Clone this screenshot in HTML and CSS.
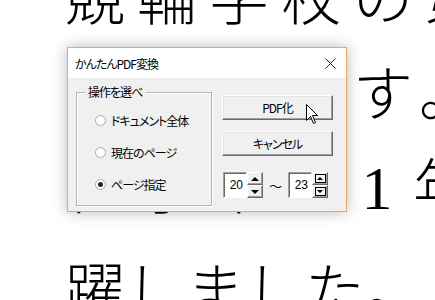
FILE: index.html
```html
<!DOCTYPE html>
<html lang="ja">
<head>
    <meta charset="UTF-8">
    <title>かんたんPDF変換</title>
    <link rel="stylesheet" href="styles.css">
</head>
<body>
    <div class="doc">
        <p class="line wide">競輪学校の第</p>
        <p class="line wide">卒業生です。</p>
        <p class="line wide lift">在学中に<span class="num">1</span>年</p>
        <p class="line">躍しました。</p>
    </div>

    <div class="dialog">
        <div class="title-bar">
            <span class="title">かんたんPDF変換</span>
            <svg class="close" width="11" height="11" viewBox="0 0 11 11">
                <path d="M0.5 0.5 L10.5 10.5 M10.5 0.5 L0.5 10.5" stroke="#222" stroke-width="1" fill="none"/>
            </svg>
        </div>
        <div class="dialog-body">
            <div class="group">
                <span class="group-label">操作を選べ</span>
                <div class="radio-row"><span class="radio"></span>ドキュメント全体</div>
                <div class="radio-row"><span class="radio"></span>現在のページ</div>
                <div class="radio-row"><span class="radio checked"></span>ページ指定</div>
            </div>
            <div class="actions">
                <div class="btn">PDF化</div>
                <div class="btn">キャンセル</div>
                <div class="range">
                    <div class="spin">
                        <div class="spin-box">20</div>
                        <div class="spin-btns">
                            <div class="spin-btn"><span class="tri up"></span></div>
                            <div class="spin-btn"><span class="tri down"></span></div>
                        </div>
                    </div>
                    <span class="tilde">～</span>
                    <div class="spin">
                        <div class="spin-box">23</div>
                        <div class="spin-btns">
                            <div class="spin-btn"><span class="boxed"><span class="tri up"></span></span></div>
                            <div class="spin-btn"><span class="boxed"><span class="tri down"></span></span></div>
                        </div>
                    </div>
                </div>
            </div>
        </div>
        <svg class="cursor" width="13" height="21" viewBox="0 0 13 21">
            <path d="M0.5 0.5 L0.5 16.5 L4.5 12.5 L7.5 19.5 L9.5 18.5 L6.5 11.5 L11.5 11.5 Z" fill="#fff" stroke="#000" stroke-width="1" stroke-linejoin="miter"/>
        </svg>
    </div>
</body>
</html>
```

FILE: styles.css
```css
html, body {
    margin: 0;
    padding: 0;
}
body {
    width: 435px;
    height: 300px;
    overflow: hidden;
    background: #fff;
    position: relative;
    font-family: "Noto Sans CJK JP", sans-serif;
}

/* document behind the dialog */
.doc {
    margin-top: -54px;
    padding-left: 65px;
    font-size: 60px;
    font-weight: 300;
    line-height: 96px;
    color: #000;
    white-space: nowrap;
}
.line {
    margin: 0;
}
.wide {
    letter-spacing: 12px;
}
.lift {
    margin-top: -3px;
    margin-bottom: 3px;
}
.num {
    display: inline-block;
    width: 60px;
    text-align: center;
    font-family: "Liberation Serif", serif;
    font-size: 62px;
}

/* dialog window */
.dialog {
    position: absolute;
    left: 67px;
    top: 47px;
    width: 278px;
    height: 163px;
    border: 1px solid #eea463;
    background: #f0f0f0;
    box-shadow: 0 0 14px rgba(0, 0, 0, 0.28);
    font-size: 12px;
    font-feature-settings: "palt";
    letter-spacing: -1px;
    color: #000;
}
.title-bar {
    height: 30px;
    background: #fff;
    display: flex;
    align-items: center;
    justify-content: space-between;
    padding: 0 10px 0 7px;
}
.dialog-body {
    display: flex;
    padding: 14px 0 0 8px;
    gap: 10px;
}

/* group box */
.group {
    position: relative;
    width: 136px;
    height: 114px;
    box-sizing: border-box;
    border: 1px solid #b4b4b4;
    box-shadow: inset 1px 1px 0 #fff, 1px 1px 0 #fff;
    padding-top: 11px;
}
.group-label {
    position: absolute;
    top: -9px;
    left: 8px;
    padding: 0 4px 0 3px;
    background: #f0f0f0;
    line-height: 16px;
}
.radio-row {
    height: 32px;
    display: flex;
    align-items: center;
    padding-left: 18px;
    gap: 5px;
}
.radio {
    width: 11px;
    height: 11px;
    border-radius: 50%;
    border: 1px solid #a8a8a8;
    background: #fff;
    box-sizing: border-box;
    position: relative;
}
.radio.checked::after {
    content: "";
    position: absolute;
    left: 2px;
    top: 2px;
    width: 5px;
    height: 5px;
    border-radius: 50%;
    background: #222;
}

/* buttons */
.actions {
    margin-top: 3px;
    width: 111px;
    display: flex;
    flex-direction: column;
    gap: 11px;
}
.btn {
    height: 25px;
    box-sizing: border-box;
    border: 1px solid;
    border-color: #fff #696969 #696969 #fff;
    box-shadow: inset -1px -1px 0 #a0a0a0, inset 1px 1px 0 #e3e3e3;
    background: #f0f0f0;
    display: flex;
    align-items: center;
    justify-content: center;
}
.range {
    margin-top: 5px;
    display: flex;
    align-items: center;
    margin-left: 1px;
}
.spin {
    display: flex;
}
.spin-box {
    width: 24px;
    height: 26px;
    box-sizing: border-box;
    background: #fff;
    border: 1px solid;
    border-color: #a0a0a0 #fff #fff #a0a0a0;
    box-shadow: inset 1px 1px 0 #696969;
    text-align: right;
    padding-right: 3px;
    line-height: 24px;
    letter-spacing: 0;
    font-family: "Liberation Sans Narrow", "Liberation Sans", sans-serif;
}
.spin-btns {
    display: flex;
    flex-direction: column;
}
.spin-btn {
    width: 16px;
    height: 13px;
    box-sizing: border-box;
    border: 1px solid;
    border-color: #fff #696969 #696969 #fff;
    box-shadow: inset -1px -1px 0 #a0a0a0;
    background: #f0f0f0;
    display: flex;
    align-items: center;
    justify-content: center;
}
.tri {
    width: 0;
    height: 0;
    border-left: 4px solid transparent;
    border-right: 4px solid transparent;
}
.tri.up {
    border-bottom: 4px solid #000;
}
.tri.down {
    border-top: 4px solid #000;
}
.boxed {
    width: 11px;
    height: 9px;
    box-sizing: border-box;
    border: 1px solid #000;
    display: flex;
    align-items: center;
    justify-content: center;
}
.boxed .tri {
    border-left-width: 3px;
    border-right-width: 3px;
}
.boxed .tri.up {
    border-bottom-width: 3px;
}
.boxed .tri.down {
    border-top-width: 3px;
}
.tilde {
    width: 25px;
    text-align: center;
    font-size: 13px;
    letter-spacing: 0;
}

/* mouse pointer */
.cursor {
    position: absolute;
    left: 238px;
    top: 56px;
}
```
